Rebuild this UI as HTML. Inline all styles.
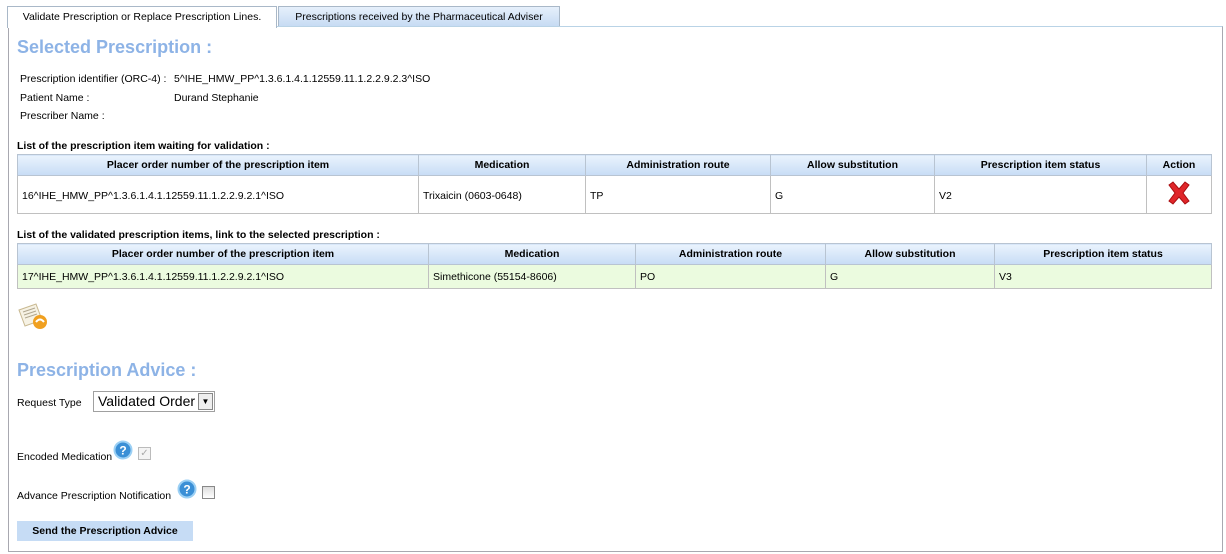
<!DOCTYPE html>
<html><head><style>
body{margin:0;width:1226px;height:554px;background:#fff;font-family:"Liberation Sans",Arial,sans-serif;font-size:10.5px;color:#000;position:relative;overflow:hidden}
.a{position:absolute;white-space:nowrap}
.tab{position:absolute;top:6px;height:20px;line-height:21px;border:1px solid #a9b8c8;border-bottom:none;text-align:center;font-size:10.5px;white-space:nowrap}
.panel{position:absolute;left:8px;top:26px;width:1213px;height:524px;border:1px solid #a8a8b0;border-top-color:#b9d3e6}
h2{position:absolute;margin:0;font-size:18px;font-weight:bold;color:#8db3e6;white-space:nowrap}
table{position:absolute;border-collapse:collapse;left:17px;width:1195px;font-size:10.5px}
th{background:linear-gradient(#eaf3fd,#c7dcf5);border:1px solid #b8c4d2;font-weight:bold;height:20px;padding:0}
td{border:1px solid #c0c0c0;padding:0 0 0 4px}
</style></head><body>
<div class="tab" style="left:7px;width:268px;background:#fff;z-index:2;height:21px">Validate Prescription or Replace Prescription Lines.</div>
<div class="tab" style="left:278px;width:280px;background:linear-gradient(#e6f0fb,#c5daf3)">Prescriptions received by the Pharmaceutical Adviser</div>
<div class="panel"></div>
<h2 style="left:17px;top:37px">Selected Prescription :</h2>
<div class="a" style="left:20px;top:73px">Prescription identifier (ORC-4) :</div>
<div class="a" style="left:174px;top:73px">5^IHE_HMW_PP^1.3.6.1.4.1.12559.11.1.2.2.9.2.3^ISO</div>
<div class="a" style="left:20px;top:92px">Patient Name :</div>
<div class="a" style="left:174px;top:92px">Durand Stephanie</div>
<div class="a" style="left:20px;top:110px">Prescriber Name :</div>
<div class="a" style="left:17px;top:140px;font-weight:bold">List of the prescription item waiting for validation :</div>
<table style="top:154px">
<tr><th style="width:400px">Placer order number of the prescription item</th><th style="width:166px">Medication</th><th style="width:184px">Administration route</th><th style="width:163px">Allow substitution</th><th style="width:211px">Prescription item status</th><th>Action</th></tr>
<tr style="height:38px"><td style="padding-top:2px">16^IHE_HMW_PP^1.3.6.1.4.1.12559.11.1.2.2.9.2.1^ISO</td><td style="padding-top:2px">Trixaicin (0603-0648)</td><td style="padding-top:2px">TP</td><td style="padding-top:2px">G</td><td style="padding-top:2px">V2</td><td style="text-align:center;padding:0"><svg width="28" height="26" viewBox="0 0 28 26"><path d="M4 5 L8 2 L14 9 L20 2 L24 5 L18 13 L24 21 L20 24 L14 17 L8 24 L4 21 L10 13Z" fill="#e0262a" stroke="#a80d10" stroke-width="1"/></svg></td></tr>
</table>
<div class="a" style="left:17px;top:229px;font-weight:bold">List of the validated prescription items, link to the selected prescription :</div>
<table style="top:243px">
<tr><th style="width:410px">Placer order number of the prescription item</th><th style="width:206px">Medication</th><th style="width:189px">Administration route</th><th style="width:168px">Allow substitution</th><th>Prescription item status</th></tr>
<tr style="height:24px;background:#ebfbdf"><td>17^IHE_HMW_PP^1.3.6.1.4.1.12559.11.1.2.2.9.2.1^ISO</td><td>Simethicone (55154-8606)</td><td>PO</td><td>G</td><td>V3</td></tr>
</table>
<svg class="a" style="left:16px;top:302px" width="34" height="30" viewBox="0 0 34 30"><path d="M3 8 L20 2 L26 18 L9 24Z" fill="#f6f2e4" stroke="#c8b890"/><path d="M7 10l12-4M8 13l12-4M9 16l12-4" stroke="#b0a890"/><circle cx="24" cy="20" r="7" fill="#f0a020"/><path d="M20 20 q4 -5 8 0" stroke="#fff" fill="none" stroke-width="2"/></svg>
<h2 style="left:17px;top:360px">Prescription Advice :</h2>
<div class="a" style="left:17px;top:397px">Request Type</div>
<div class="a" style="left:93px;top:391px;width:122px;height:21px;border:1px solid #a0a0a0;font-size:14px;line-height:19px;padding-left:4px;box-sizing:border-box">Validated Order<span class="a" style="right:1px;top:1px;width:15px;height:17px;background:#eee;border:1px solid #888;box-sizing:border-box;font-size:8px;text-align:center;line-height:15px">▼</span></div>
<div class="a" style="left:17px;top:451px">Encoded Medication</div>
<svg class="a" style="left:113px;top:440px" width="20" height="20"><circle cx="10" cy="10" r="8.5" fill="#3a8fd6" stroke="#9cd0f4" stroke-width="2"/><text x="10" y="14.5" font-size="12" font-weight="bold" fill="#fff" text-anchor="middle" font-family="Liberation Sans">?</text></svg>
<div class="a" style="left:138px;top:447px;width:11px;height:11px;border:1px solid #bbb;background:#f4f4f4;font-size:10px;color:#aaa;line-height:11px;text-align:center">✓</div>
<div class="a" style="left:17px;top:490px">Advance Prescription Notification</div>
<svg class="a" style="left:177px;top:479px" width="20" height="20"><circle cx="10" cy="10" r="8.5" fill="#3a8fd6" stroke="#9cd0f4" stroke-width="2"/><text x="10" y="14.5" font-size="12" font-weight="bold" fill="#fff" text-anchor="middle" font-family="Liberation Sans">?</text></svg>
<div class="a" style="left:202px;top:486px;width:11px;height:11px;border:1px solid #888;background:linear-gradient(#ddd,#fff)"></div>
<div class="a" style="left:17px;top:521px;width:176px;height:20px;background:#c6dcf5;font-weight:bold;text-align:center;line-height:20px">Send the Prescription Advice</div>
</body></html>
